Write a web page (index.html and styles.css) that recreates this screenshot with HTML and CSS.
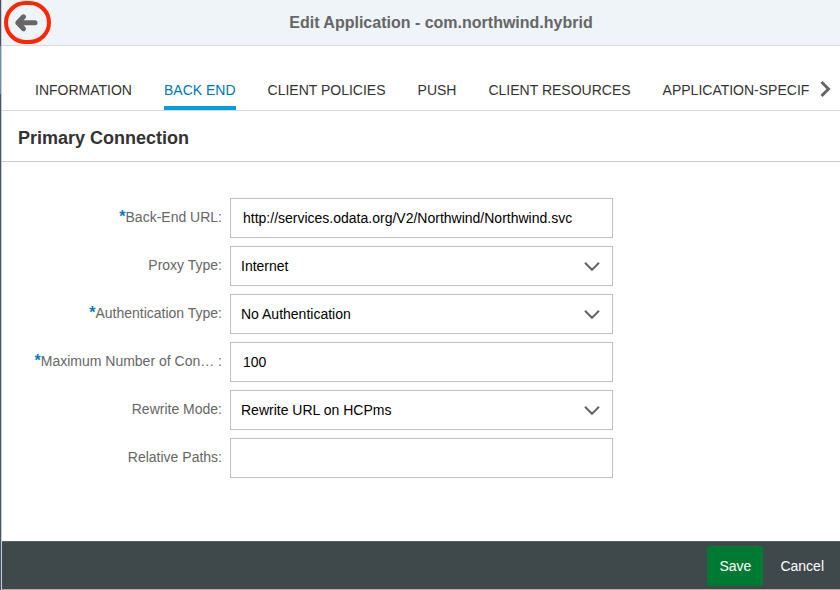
FILE: index.html
```html
<!DOCTYPE html>
<html lang="en">
<head>
<meta charset="utf-8">
<title>Edit Application</title>
<link rel="stylesheet" href="styles.css">
</head>
<body>
<div class="edge"></div>
<div class="page">
  <header class="header">
    <button class="back" type="button" aria-label="Back">
      <svg width="24" height="20" viewBox="0 0 24 20"><path d="M9.500 3.800L3.800 9.700L9.500 15.700M5 9.700H21" /></svg>
    </button>
    <span class="ring"></span>
    <h1 class="header-title">Edit Application - com.northwind.hybrid</h1>
  </header>
  <div class="tabbar">
    <nav class="tabs">
      <a class="tab" href="#">INFORMATION</a>
      <a class="tab tab-active" href="#">BACK END</a>
      <a class="tab" href="#">CLIENT POLICIES</a>
      <a class="tab" href="#">PUSH</a>
      <a class="tab" href="#">CLIENT RESOURCES</a>
      <a class="tab" href="#">APPLICATION-SPECIF</a>
    </nav>
    <button class="more" type="button" aria-label="More tabs">
      <svg width="12" height="18" viewBox="0 0 12 18"><path d="M1.500 2L8.500 9L1.500 16" /></svg>
    </button>
  </div>
  <h2 class="section-title">Primary Connection</h2>
  <form class="form" id="connection">
    <div class="row">
      <label class="label required" for="url">Back-End URL:</label>
      <input class="field" id="url" type="text" value="http://services.odata.org/V2/Northwind/Northwind.svc">
    </div>
    <div class="row">
      <label class="label" for="proxy">Proxy Type:</label>
      <div class="select-wrap">
        <select class="field select" id="proxy"><option>Internet</option></select>
        <svg class="chevron" width="16" height="10" viewBox="0 0 16 10"><path d="M1 0.800L8 7.800L15 0.800" /></svg>
      </div>
    </div>
    <div class="row">
      <label class="label required" for="auth">Authentication Type:</label>
      <div class="select-wrap">
        <select class="field select" id="auth"><option>No Authentication</option></select>
        <svg class="chevron" width="16" height="10" viewBox="0 0 16 10"><path d="M1 0.800L8 7.800L15 0.800" /></svg>
      </div>
    </div>
    <div class="row">
      <label class="label required" for="max">Maximum Number of Con… :</label>
      <input class="field" id="max" type="text" value="100">
    </div>
    <div class="row">
      <label class="label" for="rewrite">Rewrite Mode:</label>
      <div class="select-wrap">
        <select class="field select" id="rewrite"><option>Rewrite URL on HCPms</option></select>
        <svg class="chevron" width="16" height="10" viewBox="0 0 16 10"><path d="M1 0.800L8 7.800L15 0.800" /></svg>
      </div>
    </div>
    <div class="row">
      <label class="label" for="paths">Relative Paths:</label>
      <input class="field" id="paths" type="text">
    </div>
  </form>
  <footer class="footer">
    <button class="button button-save" type="submit" form="connection">Save</button>
    <button class="button" type="button">Cancel</button>
  </footer>
</div>
</body>
</html>
```
FILE: styles.css
```css
* {
  box-sizing: border-box;
}

body {
  margin: 0;
  min-height: 100vh;
  display: flex;
  background: #fff;
  color: #333;
  font: 14px/20px "Liberation Sans", Arial, sans-serif;
}

button {
  padding: 0;
  border: 0;
  background: none;
  font: inherit;
}

svg {
  display: block;
  fill: none;
  stroke: #666;
}

.edge {
  flex: none;
  width: 1px;
  background: linear-gradient(#43506b 46px, #6b8fbd 46px, #6b8fbd 94px, #40566e 94px);
}

.page {
  flex: 1;
  min-width: 0;
  display: flex;
  flex-direction: column;
  border-left: 1px solid #ccc;
  border-bottom: 1px solid #b0b0b0;
}

.header {
  position: relative;
  display: flex;
  align-items: center;
  height: 46px;
  background: #eff4f9;
  border-bottom: 1px solid #d9d9d9;
}

.back {
  flex: none;
  width: 40px;
  padding-left: 12px;
}

.back svg {
  stroke-width: 5;
  stroke-linecap: round;
  stroke-linejoin: round;
}

.ring {
  position: absolute;
  top: 1px;
  left: 2px;
  width: 47px;
  height: 43px;
  border: 4px solid #ff2600;
  border-radius: 22px;
  pointer-events: none;
}

.header-title {
  flex: 1;
  margin: 0;
  font-size: 16px;
  text-align: center;
  color: #666;
}

.tabbar {
  display: flex;
  height: 65px;
  padding: 0 8px 0 33px;
  border-bottom: 1px solid #d9d9d9;
}

.tabs {
  flex: 1;
  min-width: 0;
  display: flex;
  align-items: flex-end;
  gap: 32px;
  overflow: hidden;
}

.tab {
  flex: none;
  padding-bottom: 6px;
  border-bottom: 4px solid transparent;
  color: #333;
  text-decoration: none;
  white-space: nowrap;
}

.tab-active {
  color: #0076b3;
  border-bottom-color: #009de0;
}

.more {
  flex: none;
  align-self: flex-end;
  height: 42px;
  margin-left: 10px;
}

.more svg {
  stroke-width: 3;
}

.section-title {
  margin: 0;
  padding: 17px 16px 13px;
  border-bottom: 1px solid #ccc;
  font-size: 18px;
  line-height: 20px;
}

.form {
  flex: 1;
  display: flex;
  flex-direction: column;
  gap: 8px;
  padding: 36px 0;
}

.row {
  display: grid;
  grid-template-columns: 220fr 383fr 219fr;
  column-gap: 8px;
}

.label {
  line-height: 38px;
  text-align: right;
  white-space: nowrap;
  color: #666;
}

.required::before {
  content: "*";
  color: #007cc0;
  font-size: 16px;
  line-height: 20px;
  font-weight: bold;
}

.field {
  width: 100%;
  height: 40px;
  padding: 0 12px;
  border: 1px solid #bfbfbf;
  border-radius: 0;
  background: #fff;
  color: #000;
  font: inherit;
}

.select-wrap {
  position: relative;
}

.select {
  display: block;
  appearance: none;
  padding: 0 10px;
}

.chevron {
  position: absolute;
  top: 16px;
  right: 13px;
  stroke-width: 2;
  pointer-events: none;
}

.footer {
  display: flex;
  justify-content: flex-end;
  gap: 5px;
  padding: 4px 4px 3px;
  background: #3f484b;
  border-top: 1px solid #5c6366;
}

.button {
  height: 40px;
  padding: 0 12px;
  border-radius: 2px;
  color: #fff;
}

.button-save {
  background: #007a33;
}
```
